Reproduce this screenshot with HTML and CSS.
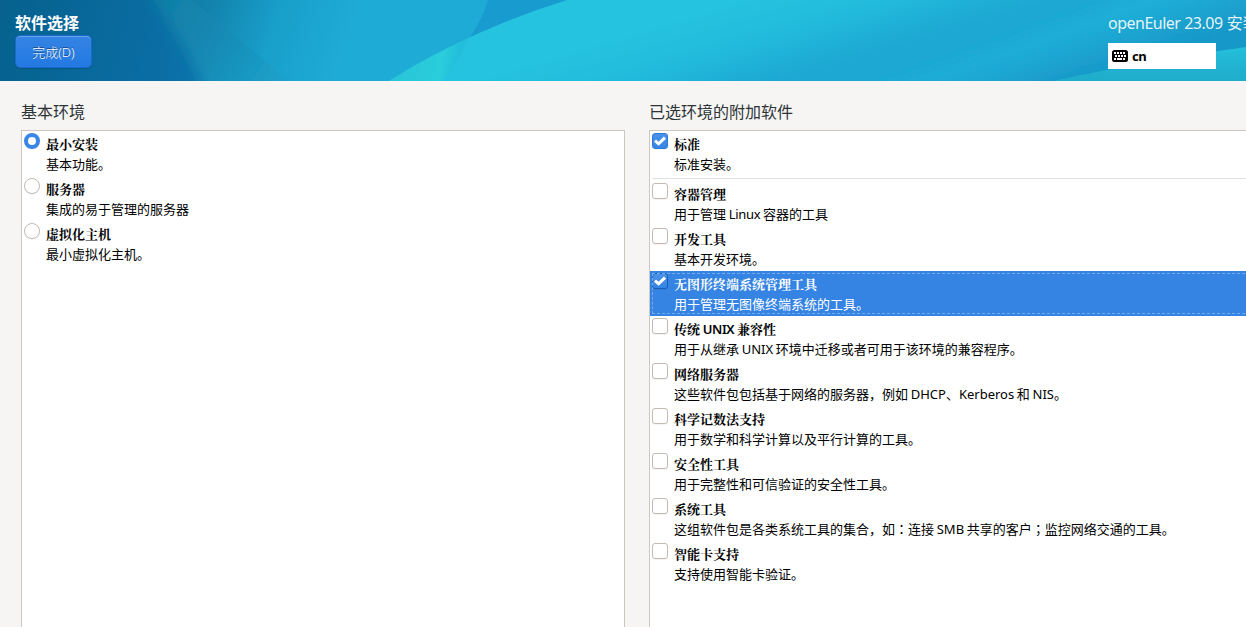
FILE: index.html
```html
<!DOCTYPE html>
<html lang="zh-CN">

<head>
  <meta charset="UTF-8">
  <meta name="viewport" content="width=device-width, initial-scale=1.0">
  <title>软件选择</title>
  <link rel="stylesheet" href="styles.css">
</head>
<body>
  <header class="header">
    <svg class="header-bg" viewBox="0 0 1246 81" preserveAspectRatio="none">
      <defs>
        <linearGradient id="dark" gradientUnits="userSpaceOnUse" x1="0" y1="0" x2="230" y2="60">
          <stop offset="0" stop-color="#06618d"/>
          <stop offset="0.5" stop-color="#096a9e"/>
          <stop offset="1" stop-color="#0c74ad"/>
        </linearGradient>
        <linearGradient id="beam" gradientUnits="userSpaceOnUse" x1="150" y1="0" x2="270" y2="81">
          <stop offset="0" stop-color="#107ea4"/>
          <stop offset="0.5" stop-color="#1488b3"/>
          <stop offset="1" stop-color="#1b9fc8"/>
        </linearGradient>
        <linearGradient id="mid" gradientUnits="userSpaceOnUse" x1="205" y1="0" x2="345" y2="50">
          <stop offset="0" stop-color="#1280aa"/>
          <stop offset="0.5" stop-color="#189fca"/>
          <stop offset="1" stop-color="#1eabd5"/>
        </linearGradient>
        <linearGradient id="main" gradientUnits="userSpaceOnUse" x1="740" y1="0" x2="765" y2="84">
          <stop offset="0" stop-color="#25c3df"/>
          <stop offset="0.5" stop-color="#22badc"/>
          <stop offset="1" stop-color="#1ca8d2"/>
        </linearGradient>
        <linearGradient id="right" gradientUnits="userSpaceOnUse" x1="1030" y1="-20" x2="1065" y2="84">
          <stop offset="0" stop-color="#25bfdd" stop-opacity="0"/>
          <stop offset="0.55" stop-color="#1fafd8"/>
          <stop offset="1" stop-color="#1898c8"/>
        </linearGradient>
        <linearGradient id="fade" gradientUnits="userSpaceOnUse" x1="0" y1="48" x2="0" y2="81">
          <stop offset="0" stop-color="#24bedb"/>
          <stop offset="1" stop-color="#1faccb"/>
        </linearGradient>
        <linearGradient id="glow" gradientUnits="userSpaceOnUse" x1="400" y1="70" x2="455" y2="80">
          <stop offset="0" stop-color="#29c6d9"/>
          <stop offset="0.7" stop-color="#29cddb"/>
          <stop offset="1" stop-color="#22bddb"/>
        </linearGradient>
        <filter id="soft" x="-10%" y="-30%" width="120%" height="160%">
          <feGaussianBlur stdDeviation="7"/>
        </filter>
      </defs>
      <rect width="1246" height="81" fill="url(#dark)"/>
      <path d="M128 -40L154 0Q185 45 200 81L212 120H340V-40Z" fill="url(#beam)" filter="url(#soft)"/>
      <path d="M192 0Q240 40 288 81H700V0Z" fill="url(#mid)"/>
      <path d="M488 0Q482 20 469 39L490 34L567 0Z" fill="#189bcf"/>
      <path d="M389 81Q470 30 567 0H1246V81Z" fill="url(#main)"/>
      <path d="M389 81Q430 55 468 39Q460 60 443 81Z" fill="url(#glow)"/>
      <path d="M850 100Q1010 45 1150 -10H1290V100Z" fill="url(#right)" filter="url(#soft)"/>
      <path d="M1053 81Q1150 60 1246 47V81Z" fill="url(#fade)"/>
    </svg>
    <div class="header-left">
      <h1 class="title">软件选择</h1>
      <button class="done">完成(D)</button>
    </div>
    <div class="header-right">
      <div class="product"><span class="version">openEuler 23.09</span> 安装</div>
      <div class="keyboard">
        <svg width="16" height="12" viewBox="0 0 16 12" shape-rendering="crispEdges">
          <rect width="16" height="12" rx="2.5" shape-rendering="auto"/>
          <path d="M2 2h2v2H2zM5 2h2v2H5zM8 2h2v2H8zM11 2h2v2h-2zM3 5h2v2H3zM6 5h2v2H6zM9 5h2v2H9zM12 5h2v2h-2zM2 8h2v2H2zM5 8h5v2H5zM11 8h2v2h-2z" fill="#fff"/>
        </svg>
        <span>cn</span>
      </div>
    </div>
  </header>

  <main class="content">
    <section class="column">
      <h2 class="label">基本环境</h2>
      <div class="list">
        <div class="row"><i class="radio on"></i><div><b>最小安装</b><p>基本功能。</p></div></div>
        <div class="row"><i class="radio"></i><div><b>服务器</b><p>集成的易于管理的服务器</p></div></div>
        <div class="row"><i class="radio"></i><div><b>虚拟化主机</b><p>最小虚拟化主机。</p></div></div>
      </div>
    </section>
    <section class="column">
      <h2 class="label">已选环境的附加软件</h2>
      <div class="list">
        <div class="row"><i class="check on"><svg viewBox="0 0 16 16"><path d="M3 7.6L6.6 10.8L13 4.6"/></svg></i><div><b>标准</b><p>标准安装。</p></div></div>
        <hr class="separator">
        <div class="row"><i class="check"></i><div><b>容器管理</b><p>用于管理 <span class="tight">Linux</span> 容器的工具</p></div></div>
        <div class="row"><i class="check"></i><div><b>开发工具</b><p>基本开发环境。</p></div></div>
        <div class="row selected"><i class="check on"><svg viewBox="0 0 16 16"><path d="M3 7.6L6.6 10.8L13 4.6"/></svg></i><div><b>无图形终端系统管理工具</b><p>用于管理无图像终端系统的工具。</p></div></div>
        <div class="row"><i class="check"></i><div><b>传统 <span class="semi">UNIX</span> 兼容性</b><p>用于从继承 UNIX 环境中迁移或者可用于该环境的兼容程序。</p></div></div>
        <div class="row"><i class="check"></i><div><b>网络服务器</b><p>这些软件包包括基于网络的服务器，例如 DHCP、Kerberos 和 NIS。</p></div></div>
        <div class="row"><i class="check"></i><div><b>科学记数法支持</b><p>用于数学和科学计算以及平行计算的工具。</p></div></div>
        <div class="row"><i class="check"></i><div><b>安全性工具</b><p>用于完整性和可信验证的安全性工具。</p></div></div>
        <div class="row"><i class="check"></i><div><b>系统工具</b><p>这组软件包是各类系统工具的集合，如<span class="mark" lang="zh-TW">：</span>连接 SMB 共享的客户<span class="mark" lang="zh-TW">；</span>监控网络交通的工具。</p></div></div>
        <div class="row"><i class="check"></i><div><b>智能卡支持</b><p>支持使用智能卡验证。</p></div></div>
      </div>
    </section>
  </main>
</body>
</html>
```
FILE: styles.css
```css
* {
  box-sizing: border-box;
  margin: 0;
  padding: 0;
}

body {
  height: 627px;
  overflow: hidden;
  display: flex;
  flex-direction: column;
  background: #f6f5f4;
  color: #000;
  font-family: "Noto Sans", "Noto Sans CJK SC", sans-serif;
  font-size: 13px;
}

/* header */
.header {
  position: relative;
  flex: none;
  display: flex;
  justify-content: space-between;
  height: 81px;
  overflow: hidden;
}

.header-bg {
  position: absolute;
  left: 0;
  top: 0;
  width: 100%;
  height: 100%;
}

.header-left,
.header-right {
  position: relative;
}

.header-left {
  padding: 11px 0 0 15px;
}

.title {
  height: 24px;
  line-height: 24px;
  font-size: 16px;
  color: #fff;
}

.done {
  display: block;
  width: 77px;
  height: 33px;
  padding-bottom: 1px;
  border: 1px solid #1b6acb;
  border-radius: 5px;
  background: linear-gradient(#3584e4, #2379e2);
  box-shadow: inset 0 1px rgba(255, 255, 255, 0.25), 0 1px 1px rgba(0, 0, 0, 0.15);
  color: #fff;
  font-family: inherit;
  font-size: 13px;
  font-weight: 300;
  text-shadow: 0 -1px rgba(0, 0, 0, 0.45);
}

.header-right {
  width: 138px;
  padding-top: 11px;
}

.product {
  height: 24px;
  margin-bottom: 8px;
  line-height: 24px;
  font-size: 16px;
  color: rgba(255, 255, 255, 0.9);
  white-space: nowrap;
}

.version {
  letter-spacing: -0.5px;
}

.keyboard {
  display: flex;
  align-items: center;
  gap: 4px;
  width: 108px;
  height: 26px;
  padding-left: 4px;
  background: #fff;
  font-weight: bold;
  letter-spacing: -0.4px;
}

/* lists */
.content {
  flex: 1;
  display: grid;
  grid-template-columns: 604px 604px;
  gap: 24px;
  padding: 19px 0 0 21px;
}

.column {
  display: flex;
  flex-direction: column;
}

.label {
  height: 30px;
  line-height: 24px;
  font-size: 16px;
  font-weight: normal;
  color: #2e3436;
}

.list {
  flex: 1;
  border: 1px solid #cdc7c2;
  border-bottom: 0;
  background: #fff;
}

.row {
  display: flex;
  gap: 6px;
  height: 45px;
  padding: 2px 2px 0;
  line-height: 20px;
  white-space: nowrap;
  word-spacing: -0.7px;
}

.row b {
  display: block;
  margin-top: 1px;
  font-family: "Noto Sans", "Noto Serif CJK SC", "Noto Sans CJK SC", serif;
}

.row .semi {
  font-weight: 600;
  letter-spacing: -0.4px;
}

.tight {
  letter-spacing: -0.3px;
}

.mark {
  font-family: "Noto Sans CJK TC", sans-serif;
}

.selected {
  background: #3584e4;
  color: #fff;
  outline: 1px dashed #74abec;
  outline-offset: -3px;
}

.separator {
  height: 1px;
  margin: 2px 0 2px 2px;
  border: 0;
  background: #e1e1e1;
}

.radio,
.check {
  flex: none;
  width: 16px;
  height: 16px;
  border: 1px solid #c2bbb4;
  border-radius: 3px;
  background: #fff;
  box-shadow: 0 1px 1px rgba(0, 0, 0, 0.05);
}

.radio {
  border-radius: 50%;
}

.radio.on {
  border: 4px solid #3987e5;
}

.check.on {
  border-color: #2b7bdc;
  background: linear-gradient(#4b92e8, #3584e4);
}

.selected .check.on {
  border-color: #185fb4;
}

.check svg {
  display: block;
  width: 16px;
  height: 16px;
  margin: -1px;
  fill: none;
  stroke: #fff;
  stroke-width: 3;
}
```
